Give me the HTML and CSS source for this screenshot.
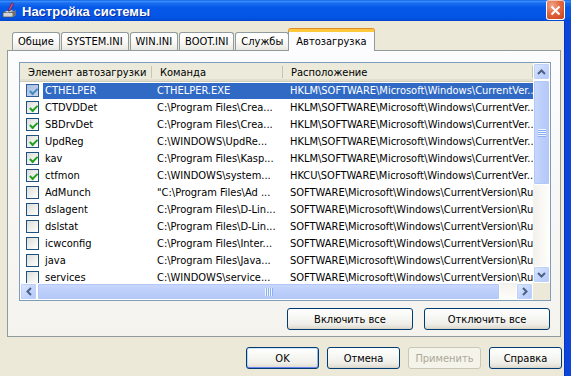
FILE: index.html
```html
<!DOCTYPE html>
<html lang="ru">
<head>
    <meta charset="UTF-8">
    <meta name="viewport" content="width=device-width, initial-scale=1.0">
    <title>Настройка системы</title>
    <link rel="stylesheet" href="styles.css">
</head>
<body>
    <div class="window">
        <div class="titlebar">
            <svg class="app-icon" width="16" height="16" viewBox="0 0 16 16">
                <path d="M1 10h10l3-2v5l-3 2H1z" fill="#8d8d8d"/>
                <path d="M1 10.5h10v4.5H1z" fill="#d4d4d4" stroke="#4a4a4a" stroke-width=".7"/>
                <path d="M11 10.5l3-2.3v4.6l-3 2.2z" fill="#707070"/>
                <path d="M2.5 9.5l7-1.2 2.5 1-7 1.2z" fill="#fff" stroke="#777" stroke-width=".4"/>
                <path d="M9.8 0.8l1.8 1-3.6 7-1.6-0.9z" fill="#e8508a" stroke="#5a1030" stroke-width=".6"/>
                <path d="M6.4 7.9l1.6 0.9-1.4 1.3z" fill="#222"/>
            </svg>
            <span class="title">Настройка системы</span>
            <div class="close-btn">
                <svg width="11" height="11" viewBox="0 0 11 11"><path d="M1.5 1.5l8 8M9.5 1.5l-8 8" stroke="#fff" stroke-width="2"/></svg>
            </div>
        </div>
        <div class="client">
            <div class="tabs">
                <div class="tab">Общие</div>
                <div class="tab">SYSTEM.INI</div>
                <div class="tab">WIN.INI</div>
                <div class="tab">BOOT.INI</div>
                <div class="tab">Службы</div>
                <div class="tab active">Автозагрузка</div>
            </div>
            <div class="tab-page">
                <div class="listview">
                    <div class="lv-top">
                        <div class="lv-view">
                            <div class="lv-header">
                                <div class="hcell">Элемент автозагрузки</div>
                                <div class="hcell">Команда</div>
                                <div class="hcell">Расположение</div>
                            </div>
                            <div class="row sel">
                                <span class="cb on"></span><span class="name">CTHELPER</span><span class="cmd">CTHELPER.EXE</span><span class="loc">HKLM\SOFTWARE\Microsoft\Windows\CurrentVer...</span>
                            </div>
                            <div class="row">
                                <span class="cb on"></span><span class="name">CTDVDDet</span><span class="cmd">C:\Program Files\Crea...</span><span class="loc">HKLM\SOFTWARE\Microsoft\Windows\CurrentVer...</span>
                            </div>
                            <div class="row">
                                <span class="cb on"></span><span class="name">SBDrvDet</span><span class="cmd">C:\Program Files\Crea...</span><span class="loc">HKLM\SOFTWARE\Microsoft\Windows\CurrentVer...</span>
                            </div>
                            <div class="row">
                                <span class="cb on"></span><span class="name">UpdReg</span><span class="cmd">C:\WINDOWS\UpdRe...</span><span class="loc">HKLM\SOFTWARE\Microsoft\Windows\CurrentVer...</span>
                            </div>
                            <div class="row">
                                <span class="cb on"></span><span class="name">kav</span><span class="cmd">C:\Program Files\Kasp...</span><span class="loc">HKLM\SOFTWARE\Microsoft\Windows\CurrentVer...</span>
                            </div>
                            <div class="row">
                                <span class="cb on"></span><span class="name">ctfmon</span><span class="cmd">C:\WINDOWS\system...</span><span class="loc">HKCU\SOFTWARE\Microsoft\Windows\CurrentVer...</span>
                            </div>
                            <div class="row">
                                <span class="cb"></span><span class="name">AdMunch</span><span class="cmd">"C:\Program Files\Ad ...</span><span class="loc">SOFTWARE\Microsoft\Windows\CurrentVersion\Run</span>
                            </div>
                            <div class="row">
                                <span class="cb"></span><span class="name">dslagent</span><span class="cmd">C:\Program Files\D-Lin...</span><span class="loc">SOFTWARE\Microsoft\Windows\CurrentVersion\Run</span>
                            </div>
                            <div class="row">
                                <span class="cb"></span><span class="name">dslstat</span><span class="cmd">C:\Program Files\D-Lin...</span><span class="loc">SOFTWARE\Microsoft\Windows\CurrentVersion\Run</span>
                            </div>
                            <div class="row">
                                <span class="cb"></span><span class="name">icwconfig</span><span class="cmd">C:\Program Files\Inter...</span><span class="loc">SOFTWARE\Microsoft\Windows\CurrentVersion\Run</span>
                            </div>
                            <div class="row">
                                <span class="cb"></span><span class="name">java</span><span class="cmd">C:\Program Files\Java...</span><span class="loc">SOFTWARE\Microsoft\Windows\CurrentVersion\Run</span>
                            </div>
                            <div class="row">
                                <span class="cb"></span><span class="name">services</span><span class="cmd">C:\WINDOWS\service...</span><span class="loc">SOFTWARE\Microsoft\Windows\CurrentVersion\Run</span>
                            </div>
                        </div>
                        <div class="vscroll">
                            <div class="sb-btn"><svg width="9" height="6" viewBox="0 0 9 6"><path d="M1 5l3.5-3.5L8 5" stroke="#4d6185" stroke-width="2" fill="none"/></svg></div>
                            <div class="sb-thumb"><span class="grip"></span></div>
                            <div class="sb-track"></div>
                            <div class="sb-btn"><svg width="9" height="6" viewBox="0 0 9 6"><path d="M1 1l3.5 3.5L8 1" stroke="#4d6185" stroke-width="2" fill="none"/></svg></div>
                        </div>
                    </div>
                    <div class="hscroll-row">
                        <div class="hscroll">
                            <div class="sb-btn"><svg width="6" height="9" viewBox="0 0 6 9"><path d="M5 1L1.5 4.5 5 8" stroke="#4d6185" stroke-width="2" fill="none"/></svg></div>
                            <div class="sb-thumb"><span class="grip"></span></div>
                            <div class="sb-track"></div>
                            <div class="sb-btn"><svg width="6" height="9" viewBox="0 0 6 9"><path d="M1 1l3.5 3.5L1 8" stroke="#4d6185" stroke-width="2" fill="none"/></svg></div>
                        </div>
                        <div class="sb-corner"></div>
                    </div>
                </div>
                <div class="page-buttons">
                    <button class="btn wide">Включить все</button>
                    <button class="btn wide">Отключить все</button>
                </div>
            </div>
            <div class="dialog-buttons">
                <button class="btn default">OK</button>
                <button class="btn">Отмена</button>
                <button class="btn" disabled>Применить</button>
                <button class="btn">Справка</button>
            </div>
        </div>
    </div>
</body>
</html>
```

FILE: styles.css
```css
* {
    box-sizing: border-box;
}
body {
    margin: 0;
    width: 571px;
    height: 376px;
    overflow: hidden;
    font-family: "DejaVu Sans Condensed", "DejaVu Sans", sans-serif;
    font-stretch: condensed;
    font-size: 11px;
    color: #000;
    background: #ece9d8;
}
.window {
    display: flex;
    flex-direction: column;
    height: 376px;
}

/* title bar */
.titlebar {
    height: 21px;
    display: flex;
    align-items: flex-start;
    padding-left: 2px;
    background: linear-gradient(#0a5fe8, #3d8ffc 6%, #1a6ff0 14%, #0559e8 35%, #0456e6 75%, #0350dd 92%, #0244c8);
}
.app-icon {
    margin-top: 2px;
}
.title {
    margin-left: 4px;
    margin-top: 4px;
    color: #fff;
    font-family: "Liberation Sans", Arial, sans-serif;
    font-stretch: normal;
    font-weight: bold;
    font-size: 13px;
    text-shadow: 1px 1px #0d2e9e;
}
.close-btn {
    margin-left: auto;
    margin-right: 6px;
    width: 19px;
    height: 20px;
    display: flex;
    align-items: center;
    justify-content: center;
    border: 1px solid #fff;
    border-top-color: #f4c9b8;
    border-radius: 3px;
    background: radial-gradient(circle at 30% 25%, #f0a58a, #e2683f 45%, #c8401c);
}

/* client area */
.client {
    flex: 1;
    padding: 8px 4px 0 7px;
    border-right: 6px solid #0b45dc;
    box-shadow: inset -1px 0 #0835c0;
}
.tabs {
    display: flex;
    align-items: flex-end;
    height: 21px;
    padding-left: 5px;
}
.tab {
    height: 18px;
    padding: 2px 5px 0;
    margin-right: 1px;
    border: 1px solid #919b9c;
    border-bottom: none;
    border-radius: 3px 3px 0 0;
    background: linear-gradient(#fff, #fbfbfa 45%, #f0efea 80%, #e8e7e1);
    white-space: nowrap;
}
.tab.active {
    position: relative;
    z-index: 1;
    height: 22px;
    margin: 0 -1px -1px -2px;
    padding: 3px 7px 0;
    background: #fcfcfe;
    border-top: 3px solid #ffc83c;
    box-shadow: 0 -1px #e68b2c;
}
.tab-page {
    height: 287px;
    padding: 11px 9px 6px 11px;
    border: 1px solid #919b9c;
    background: linear-gradient(#fcfcfe, #f4f3ee);
}

/* list view */
.listview {
    width: 532px;
    height: 239px;
    border: 1px solid #7f9db9;
    background: #fff;
}
.lv-top {
    display: flex;
    height: 220px;
}
.lv-view {
    width: 513px;
    overflow: hidden;
}
.lv-header {
    display: grid;
    grid-template-columns: 132px 131px 1fr;
    height: 19px;
    background: #ebeadb;
    border-bottom: 1px solid #d0cdbb;
    box-shadow: inset 0 -2px #e2dfcf;
}
.hcell {
    padding: 3px 0 0 8px;
    white-space: nowrap;
    background: linear-gradient(#c7c5b2, #c7c5b2) right 3px / 1px 12px no-repeat;
}
.row {
    display: grid;
    grid-template-columns: 23px 109px 131px 250px;
    height: 17px;
    align-items: center;
    white-space: nowrap;
}
.row span {
    overflow: hidden;
}
.row .name, .row .cmd, .row .loc {
    height: 16px;
    line-height: 16px;
}
.name {
    padding-left: 2px;
}
.cmd {
    padding-left: 5px;
}
.loc {
    padding-left: 7px;
}
.row.sel .name, .row.sel .cmd, .row.sel .loc {
    background: #316ac5;
    color: #fff;
}
.cb {
    width: 13px;
    height: 13px;
    margin-left: 6px;
    position: relative;
    border: 1px solid #1c5180;
    background: linear-gradient(135deg, #dcdcd7, #f5f5f2 70%, #fff);
}
.cb.on::after {
    content: "";
    position: absolute;
    left: 2px;
    top: 1px;
    width: 6px;
    height: 3px;
    border-left: 2px solid #21a121;
    border-bottom: 2px solid #21a121;
    transform: rotate(-45deg) translate(-1px, 2px);
}
.row.sel .cb {
    border-color: #2f5f9a;
    background: linear-gradient(135deg, #a8bde0, #c9d6ee);
}
.row.sel .cb::after {
    border-color: #3f8cc0;
}

/* scroll bars */
.vscroll {
    width: 17px;
    display: flex;
    flex-direction: column;
    background: linear-gradient(to right, #f3f1ec, #fefefb);
}
.sb-btn {
    width: 17px;
    height: 17px;
    flex-shrink: 0;
    display: flex;
    align-items: center;
    justify-content: center;
    border: 1px solid #fff;
    border-radius: 2px;
    background: linear-gradient(135deg, #dde8fe, #c3d5fd 55%, #b1c8f9);
    box-shadow: inset 0 0 0 1px #c0d1f8;
}
.sb-thumb {
    display: flex;
    align-items: center;
    justify-content: center;
    border: 1px solid #fff;
    border-radius: 2px;
    background: linear-gradient(to right, #c9d8fc, #bccefa 50%, #b4c8f7);
    box-shadow: inset 0 0 0 1px #b4c8f6;
}
.vscroll .sb-thumb {
    height: 105px;
}
.vscroll .grip {
    width: 8px;
    height: 8px;
    background: repeating-linear-gradient(#eef4fe 0 1px, #8cb0f8 1px 2px);
}
.sb-track {
    flex: 1;
}
.hscroll-row {
    display: flex;
    height: 17px;
}
.hscroll {
    width: 513px;
    display: flex;
    background: linear-gradient(#f3f1ec, #fefefb);
}
.hscroll .sb-thumb {
    width: 463px;
    background: linear-gradient(#c9d8fc, #bccefa 50%, #b4c8f7);
}
.hscroll .grip {
    width: 8px;
    height: 8px;
    background: repeating-linear-gradient(to right, #eef4fe 0 1px, #8cb0f8 1px 2px);
}
.sb-corner {
    width: 17px;
    background: #ece9d8;
}

/* buttons */
.page-buttons {
    display: flex;
    justify-content: flex-end;
    gap: 11px;
    margin-top: 7px;
    padding-right: 1px;
}
.dialog-buttons {
    display: flex;
    justify-content: flex-end;
    gap: 8px;
    margin: 10px -1px 0 0;
}
.btn {
    width: 73px;
    height: 22px;
    padding: 0;
    font: inherit;
    color: #000;
    border: 1px solid #003c74;
    border-radius: 3px;
    background: linear-gradient(#fff, #f8f8f5 35%, #efeee9 75%, #e3e0d6 92%, #d6d0c5);
}
.btn.wide {
    width: 126px;
}
.btn.default {
    box-shadow: inset 0 1px #cee7ff, inset 0 -1px #6982ee, inset 1px 0 #b8d0f8, inset -1px 0 #98b3f0;
}
.btn:disabled {
    color: #aca899;
    border-color: #c9c7ba;
    background: #f5f4ea;
}
```
